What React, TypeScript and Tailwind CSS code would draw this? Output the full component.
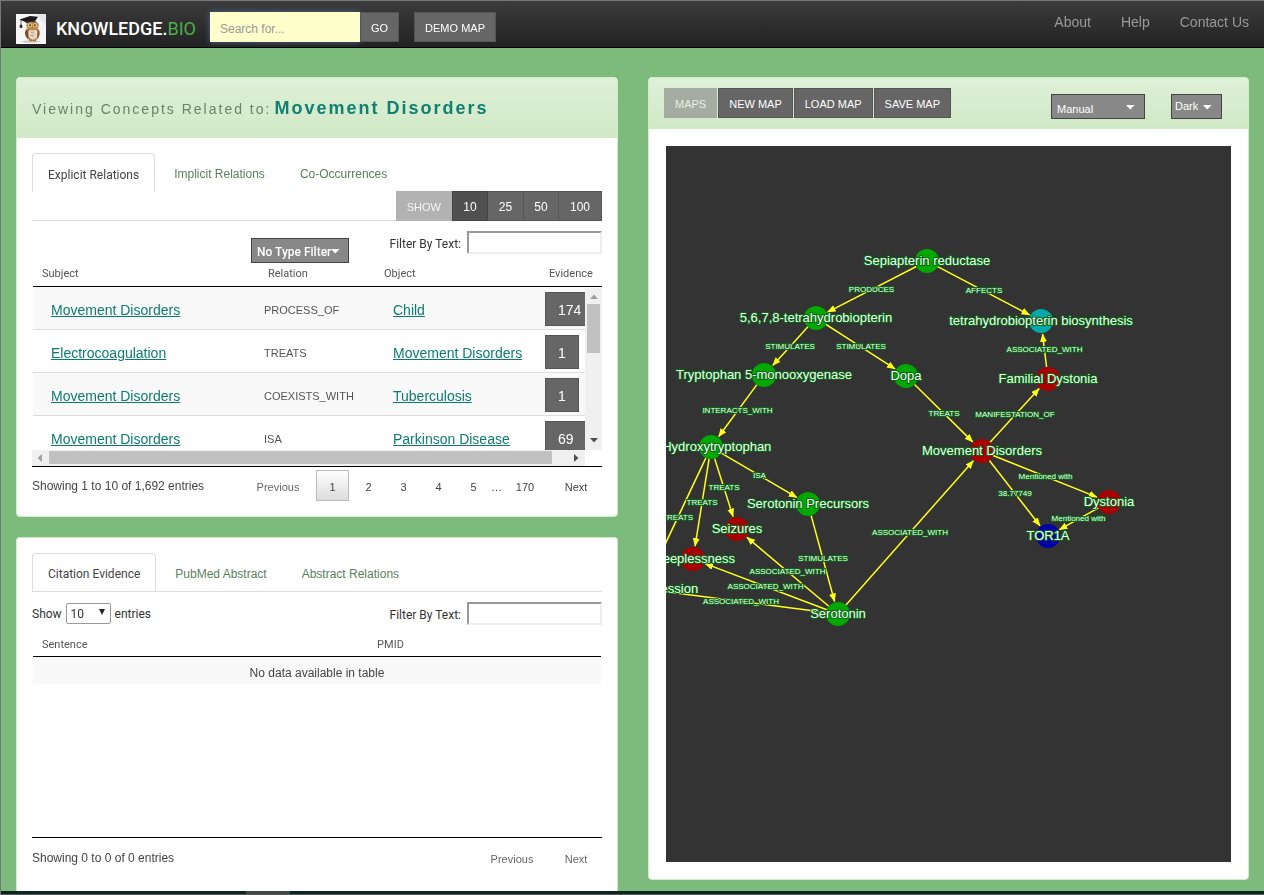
import { useId } from "react";

const cardBorder = "border border-[#d3ebc8]";
const darkButton =
  "h-[30px] border border-[#555] bg-[#666] px-[10px] pt-[2px] text-[11px] leading-4 text-white";
const countButton =
  "h-[30px] border border-l-0 border-[#555] bg-[#666] pt-[2px] text-[12px] text-white";

function Owl() {
  return (
    <svg width="30" height="30" viewBox="0 0 30 30" aria-hidden="true" className="shrink-0">
      <rect width="30" height="30" fill="#f7f6f5" />
      <path d="M20 0h10v12z" fill="#e6e6ea" />
      <ellipse cx="15" cy="27.5" rx="9" ry="1.2" fill="#c9c7c4" />
      <ellipse cx="16.5" cy="19.5" rx="6.8" ry="7.4" fill="#a8794c" />
      <ellipse cx="17" cy="20" rx="4.800" ry="5.800" fill="#e8d8c0" />
      <path d="M10.5 15c-2.500 3-1.500 8 1.500 10 .5-4 .5-7-1.500-10z" fill="#7a4a26" />
      <path d="M22.500 15c1.800 3 1.500 7-.8 10-.8-4-.6-7 .8-10z" fill="#8a5a30" />
      <ellipse cx="16.500" cy="11.500" rx="6.200" ry="5" fill="#c08a4c" />
      <circle cx="14" cy="11.200" r="1.900" fill="#f2dca8" />
      <circle cx="19" cy="11.200" r="1.900" fill="#f2dca8" />
      <circle cx="14.200" cy="11.300" r="1" fill="#3c2414" />
      <circle cx="18.800" cy="11.300" r="1" fill="#3c2414" />
      <path d="M15.600 12.500h1.800l-.9 2.200z" fill="#c9732b" />
      <path d="M15 18l1.500 1 1.500-1M14.500 21l1.700 1 1.800-1" stroke="#b08a60" fill="none" strokeWidth=".8" />
      <path d="M13.500 26.500h2.500M17.500 26.500h2.500" stroke="#a8743c" strokeWidth="1.500" />
      <path d="M3.500 5.500 14 2l8 .8-3 4.400-8.500 1.200z" fill="#191919" />
      <path d="M9.500 7.500 19 6.200l.6 2.300c-3-1-6.500-.6-9.600.8z" fill="#333" />
      <path d="M5 5.800v5.400M4.200 11h1.600l.3 2.500H4z" stroke="#222" strokeWidth=".7" fill="#222" />
    </svg>
  );
}

function Caret({ className }: { className: string }) {
  return (
    <svg width="9" height="5" viewBox="0 0 9 5" aria-hidden="true" className={`pointer-events-none absolute ${className}`}>
      <path d="M0 0h8.500L4.250 4.500z" fill="currentColor" />
    </svg>
  );
}

function Tabs({ names, className }: { names: string[]; className: string }) {
  return (
    <div role="tablist" className={`flex h-[39px] items-end text-[12px] ${className}`}>
      {names.map((name, i) => (
        <button
          key={name}
          role="tab"
          aria-selected={i === 0}
          className={
            i === 0
              ? "h-full rounded-t border border-b-0 border-[#ddd] bg-white px-[15px] pt-[3px] font-['Roboto'] text-[12px] text-[#444]"
              : "ml-[3px] h-full px-4 pt-[3px] text-[#5a7f5c]"
          }
        >
          {name}
        </button>
      ))}
    </div>
  );
}

function TextFilter() {
  const id = useId();
  return (
    <div className="ml-auto flex items-center gap-[6px]">
      <label htmlFor={id} className="pt-[3px] font-['Roboto'] text-[12px] text-[#333]">
        Filter By Text:
      </label>
      <input
        id={id}
        type="text"
        className="h-[23px] w-[135px] border-2 border-[#eee] border-t-[#999] border-l-[#999] bg-white px-1 text-[12px]"
      />
    </div>
  );
}

const relations = [
  ["Movement Disorders", "PROCESS_OF", "Child", "174"],
  ["Electrocoagulation", "TREATS", "Movement Disorders", "1"],
  ["Movement Disorders", "COEXISTS_WITH", "Tuberculosis", "1"],
  ["Movement Disorders", "ISA", "Parkinson Disease", "69"],
];

function RelationsTable() {
  const link = "text-[14px] leading-5 text-[#0b7d70] underline";
  return (
    <div className="relative h-[206px] overflow-hidden">
      <table className="ml-px w-full table-fixed border-collapse text-left">
        <colgroup>
          <col className="w-[217px]" />
          <col className="w-[125px]" />
          <col className="w-[165px]" />
          <col />
        </colgroup>
        <thead>
          <tr className="h-[26px] border-b border-black font-['Roboto'] text-[11px] text-[#555]">
            <th className="pt-[2px] pl-[9px] font-normal">Subject</th>
            <th className="pt-[2px] pl-[18px] font-normal">Relation</th>
            <th className="pt-[2px] pl-[9px] font-normal">Object</th>
            <th className="pt-[2px] pl-[9px] font-normal">Evidence</th>
          </tr>
        </thead>
        <tbody>
          {relations.map(([subject, relation, object, count], i) => (
            <tr key={i} className="h-[43px] border-b border-[#ddd] odd:bg-[#f9f9f9]">
              <td className="pt-[4px] pl-[18px]">
                <a href="#subject" className={link}>{subject}</a>
              </td>
              <td className="pt-[6px] pl-[14px] text-[11px] text-[#555]">{relation}</td>
              <td className="pt-[4px] pl-[18px]">
                <a href="#object" className={link}>{object}</a>
              </td>
              <td className="p-0 pt-[3px] pl-[5px] align-middle">
                <button className="h-[34px] border border-[#555] bg-[#666] px-3 pt-px text-[14px] leading-5 text-white">
                  {count}
                </button>
              </td>
            </tr>
          ))}
        </tbody>
      </table>
      <div className="absolute top-[28px] right-0 bottom-[16px] w-[17px] bg-[#f0f0f0]">
        <svg className="absolute top-[6px] left-[5px]" width="8" height="5" aria-hidden="true"><path d="M0 5h8L4 .5z" fill="#a0a0a0" /></svg>
        <div className="absolute top-[16px] right-[2px] left-[2px] h-[49px] bg-[#c1c1c1]" />
        <svg className="absolute bottom-[7px] left-[5px]" width="8" height="5" aria-hidden="true"><path d="M0 0h8L4 4.500z" fill="#505050" /></svg>
      </div>
      <div className="absolute inset-x-0 bottom-0 h-[16px] bg-white">
        <div className="relative mr-[17px] h-full bg-[#f0f0f0]">
          <svg className="absolute top-[4px] left-[5px]" width="5" height="8" aria-hidden="true"><path d="M5 0v8L.5 4z" fill="#a0a0a0" /></svg>
          <div className="absolute top-px right-[33px] left-[17px] h-[13px] bg-[#c1c1c1]" />
          <svg className="absolute top-[4px] right-[6px]" width="5" height="8" aria-hidden="true"><path d="M0 0v8l4.500-4z" fill="#505050" /></svg>
        </div>
      </div>
    </div>
  );
}

type Node = { id: string; x: number; y: number; color: string };
const green = "#00a800";
const red = "#a80000";
const nodes: Node[] = [
  { id: "Sepiapterin reductase", x: 261, y: 115, color: green },
  { id: "5,6,7,8-tetrahydrobiopterin", x: 150, y: 172, color: green },
  { id: "tetrahydrobiopterin biosynthesis", x: 375, y: 175, color: "#00a8a8" },
  { id: "Tryptophan 5-monooxygenase", x: 98, y: 229, color: green },
  { id: "Dopa", x: 240, y: 230, color: green },
  { id: "Familial Dystonia", x: 382, y: 233, color: red },
  { id: "Movement Disorders", x: 316, y: 305, color: red },
  { id: "Dystonia", x: 443, y: 356, color: red },
  { id: "TOR1A", x: 382, y: 390, color: "#0000a8" },
  { id: "5-Hydroxytryptophan", x: 45, y: 301, color: green },
  { id: "Serotonin Precursors", x: 142, y: 358, color: green },
  { id: "Seizures", x: 71, y: 383, color: red },
  { id: "Sleeplessness", x: 27, y: 413, color: red },
  { id: "Mental Depression", x: -22, y: 443, color: red },
  { id: "Serotonin", x: 172, y: 468, color: green },
];
const edges: [number, number, string][] = [
  [0, 1, "PRODUCES"],
  [0, 2, "AFFECTS"],
  [1, 3, "STIMULATES"],
  [1, 4, "STIMULATES"],
  [3, 9, "INTERACTS_WITH"],
  [4, 6, "TREATS"],
  [5, 2, "ASSOCIATED_WITH"],
  [6, 5, "MANIFESTATION_OF"],
  [6, 7, "Mentioned with"],
  [6, 8, "38.77749"],
  [7, 8, "Mentioned with"],
  [9, 10, "ISA"],
  [9, 11, "TREATS"],
  [9, 12, "TREATS"],
  [9, 13, "TREATS"],
  [10, 14, "STIMULATES"],
  [14, 11, "ASSOCIATED_WITH"],
  [14, 12, "ASSOCIATED_WITH"],
  [14, 13, "ASSOCIATED_WITH"],
  [14, 6, "ASSOCIATED_WITH"],
];

function ConceptMap() {
  return (
    <div className="relative min-h-[500px] flex-1 overflow-hidden bg-[#333]">
      <svg className="absolute inset-0 h-full w-full font-['Liberation_Sans',sans-serif]" role="img" aria-label="Concept map">
        <defs>
          <marker id="arrow" markerUnits="userSpaceOnUse" markerWidth="9" markerHeight="8" refX="8" refY="4" orient="auto">
            <path d="M0 0.500 8.500 4 0 7.500z" fill="#ffff1a" />
          </marker>
        </defs>
        {edges.map(([from, to], i) => {
          const a = nodes[from];
          const b = nodes[to];
          const d = Math.hypot(b.x - a.x, b.y - a.y);
          const ux = (b.x - a.x) / d;
          const uy = (b.y - a.y) / d;
          return (
            <line
              key={i}
              x1={a.x + ux * 12}
              y1={a.y + uy * 12}
              x2={b.x - ux * 13}
              y2={b.y - uy * 13}
              stroke="#ffff1a"
              strokeWidth="1.500"
              markerEnd="url(#arrow)"
            />
          );
        })}
        {nodes.map((n) => (
          <circle key={n.id} cx={n.x} cy={n.y} r="12" fill={n.color} />
        ))}
        <g fill="#f0fff2" stroke="#0a6416" strokeWidth="2" strokeLinejoin="round" paintOrder="stroke" textAnchor="middle">
          {edges.map(([from, to, label], i) => (
            <text key={i} x={(nodes[from].x + nodes[to].x) / 2} y={(nodes[from].y + nodes[to].y) / 2 + 2} className="text-[8px]">
              {label}
            </text>
          ))}
          {nodes.map((n) => (
            <text key={n.id} x={n.x} y={n.y + 4} className="text-[13px]">
              {n.id}
            </text>
          ))}
        </g>
      </svg>
    </div>
  );
}

export default function App() {
  const pager = "h-[31px] pt-[3px] text-center text-[11px] text-[#444]";
  return (
    <div className="flex min-h-screen flex-col border-t border-l border-[#777] bg-[#7cbb7c] font-['Liberation_Sans',Arial,sans-serif] text-[12px] text-[#333]">
      <header className="flex h-[47px] items-start border-b border-black bg-linear-to-b from-[#3c3c3c] to-[#222] px-[15px]">
        <a href="#home" className="mt-[13px] flex items-center gap-[10px]">
          <Owl />
          <span className="font-['Roboto'] text-[18px] leading-6 font-medium text-white">
            KNOWLEDGE.<span className="font-normal text-[#4cae4c]">BIO</span>
          </span>
        </a>
        <form className="mt-[11px] ml-[14px] flex" onSubmit={(e) => e.preventDefault()}>
          <input
            type="text"
            autoFocus
            aria-label="Search"
            placeholder="Search for..."
            className="h-[30px] w-[150px] bg-[#ffffcb] px-[10px] pt-1 text-[12px] shadow-[0_0_6px_#4a6a8c] outline-none placeholder:text-[#999]"
          />
          <button className={darkButton}>GO</button>
          <button type="button" className={`ml-[15px] ${darkButton}`}>DEMO MAP</button>
        </form>
        <nav className="mt-[11px] ml-auto flex gap-[30px] text-[14px] leading-5 text-[#999]">
          <a href="#about">About</a>
          <a href="#help">Help</a>
          <a href="#contact" className="whitespace-nowrap">Contact Us</a>
        </nav>
      </header>

      <main className="grid flex-1 grid-cols-[602fr_601fr] gap-[30px] px-[15px] pt-[29px]">
        <div className="flex flex-col gap-5">
          <section className={`overflow-hidden rounded bg-white ${cardBorder}`}>
            <h1 className="flex h-[60px] items-center gap-[3px] bg-linear-to-b from-[#dff0d8] to-[#d0e9c6] px-[15px] tracking-[2px]">
              <span className="pt-[3px] text-[14px] text-[#6f7f6c]">Viewing Concepts Related to:</span>
              <span className="text-[18px] font-bold text-[#118072]">Movement Disorders</span>
            </h1>
            <div className="p-[15px]">
              <Tabs names={["Explicit Relations", "Implicit Relations", "Co-Occurrences"]} className="" />
              <div className="-mt-px flex justify-end">
                <div className="flex-1 border-b border-[#ddd]" />
                <span className="flex h-[30px] items-center bg-[#b2b2b2] px-[11px] pt-[2px] text-[11px] text-[#f4f4f4]">SHOW</span>
                <button className="h-[30px] w-[36px] border border-[#444] bg-[#505050] pt-[2px] text-[12px] text-white">10</button>
                <button className={`w-[36px] ${countButton}`}>25</button>
                <button className={`w-[35px] ${countButton}`}>50</button>
                <button className={`w-[43px] ${countButton}`}>100</button>
              </div>
              <div className="flex items-start pt-[10px]">
                <div className="relative mt-[7px] ml-[219px] text-white">
                  <select aria-label="Type filter" className="h-[25px] w-[98px] appearance-none border border-[#444] bg-[#888] pt-[2px] pl-[5px] font-['Roboto'] text-[12px] font-medium">
                    <option>No Type Filter</option>
                  </select>
                  <Caret className="top-[11px] right-[9px]" />
                </div>
                <TextFilter />
              </div>
              <div className="-mt-[3px]">
                <RelationsTable />
              </div>
              <div className="flex items-center border-t border-black pt-[3px]">
                <p className="text-[12px] text-[#444]">Showing 1 to 10 of 1,692 entries</p>
                <div className="ml-auto flex items-center">
                  <button className={`${pager} w-[76px] text-[#666]`}>Previous</button>
                  <button className={`${pager} w-[33px] border border-[#bbb] bg-linear-to-b from-white to-[#dcdcdc]`}>1</button>
                  <button className={`${pager} ml-[2px] w-[35px]`}>2</button>
                  <button className={`${pager} w-[35px]`}>3</button>
                  <button className={`${pager} w-[35px]`}>4</button>
                  <button className={`${pager} w-[35px]`}>5</button>
                  <span className="w-[9px] pt-[3px] text-[11px]">…</span>
                  <button className={`${pager} w-[50px]`}>170</button>
                  <button className={`${pager} w-[52px]`}>Next</button>
                </div>
              </div>
            </div>
          </section>

          <section className={`flex flex-1 flex-col rounded-t border-b-0 bg-white px-[15px] pt-[15px] pb-[18px] ${cardBorder}`}>
            <Tabs names={["Citation Evidence", "PubMed Abstract", "Abstract Relations"]} className="border-b border-[#ddd]" />
            <div className="flex items-start pt-[10px]">
              <label className="flex items-center gap-1 pt-px font-['Roboto'] text-[12px]">
                Show
                <span className="relative">
                  <select className="h-[21px] w-[45px] appearance-none rounded-[2px] border border-[#999] bg-white pl-1 text-[12px]">
                    <option>10</option>
                  </select>
                  <svg width="6" height="6" viewBox="0 0 6 6" aria-hidden="true" className="pointer-events-none absolute top-[6px] right-[6px]">
                    <path d="M0 0h6L3 6z" fill="#222" />
                  </svg>
                </span>
                entries
              </label>
              <TextFilter />
            </div>
            <table className="mx-px mt-[5px] table-fixed border-collapse text-left">
              <thead>
                <tr className="h-[26px] border-b border-black font-['Roboto'] text-[11px] text-[#555]">
                  <th className="w-[59%] pt-[4px] pl-[9px] font-normal">Sentence</th>
                  <th className="pt-[4px] pl-[9px] font-normal">PMID</th>
                </tr>
              </thead>
              <tbody>
                <tr className="h-[28px] bg-[#f9f9f9]">
                  <td colSpan={2} className="pt-[6px] text-center text-[12px] text-[#444]">No data available in table</td>
                </tr>
              </tbody>
            </table>
            <div className="mt-auto flex items-center border-t border-black pt-[4px]">
              <p className="text-[#444]">Showing 0 to 0 of 0 entries</p>
              <div className="ml-auto flex">
                <button className={`${pager} w-[76px] text-[#666]`}>Previous</button>
                <button className={`${pager} w-[52px] text-[#666]`}>Next</button>
              </div>
            </div>
          </section>
        </div>

        <section className={`mb-[11px] flex flex-col overflow-hidden rounded bg-white ${cardBorder}`}>
          <div className="flex h-[51px] items-start bg-linear-to-b from-[#dff0d8] to-[#d0e9c6] px-[15px] pt-[10px]">
            <span className="mr-px flex h-[30px] items-center bg-[#a4aca1] px-[11px] pt-[2px] text-[11px] text-[#e4f0e0]">MAPS</span>
            <div className="flex gap-px">
              <button className={darkButton}>NEW MAP</button>
              <button className={darkButton}>LOAD MAP</button>
              <button className={darkButton}>SAVE MAP</button>
            </div>
            <div className="mt-[6px] mr-[11px] ml-auto flex gap-[26px] text-white">
              <div className="relative">
                <select aria-label="Layout" className="h-[25px] w-[94px] appearance-none border border-[#444] bg-[#888] pt-[5px] pl-[5px] text-[11px]">
                  <option>Manual</option>
                </select>
                <Caret className="top-[11px] right-[10px]" />
              </div>
              <div className="relative">
                <select aria-label="Theme" className="h-[25px] w-[51px] appearance-none border border-[#444] bg-[#888] pl-[3px] text-[11px]">
                  <option>Dark</option>
                </select>
                <Caret className="top-[11px] right-[10px]" />
              </div>
            </div>
          </div>
          <div className="flex flex-1 flex-col p-[17px]">
            <ConceptMap />
          </div>
        </section>
      </main>
      <footer className="flex h-1 border-b border-[#555] bg-[#0c2621] pl-[245px]">
        <div className="w-[44px] bg-[#3c4b48]" />
      </footer>
    </div>
  );
}
